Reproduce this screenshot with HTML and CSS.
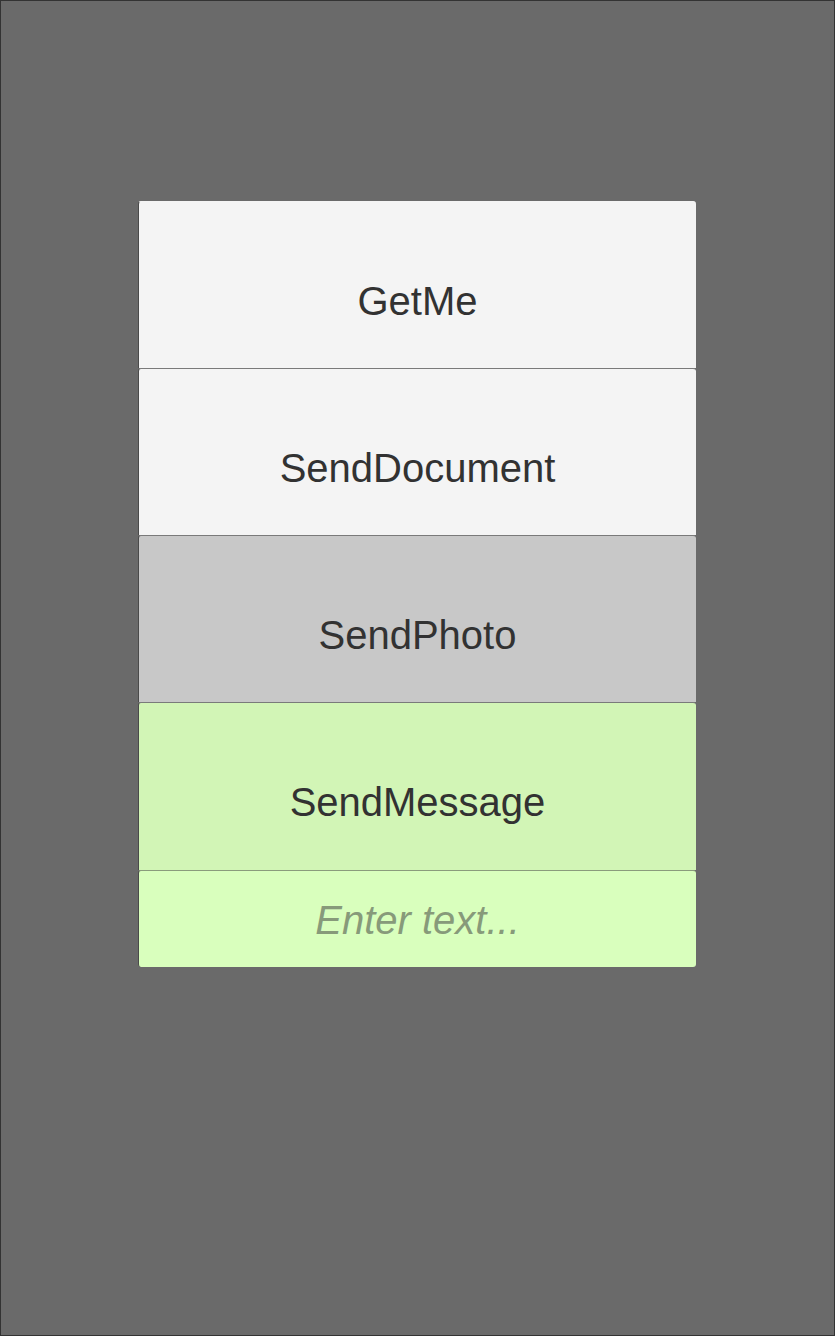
FILE: index.html
```html
<!DOCTYPE html>
<html>
<head>
<meta charset="utf-8">
<link rel="stylesheet" href="styles.css">
</head>
<body>
<div class="screen">
  <div class="panel">
    <button class="btn btn-first">GetMe</button>
    <button class="btn">SendDocument</button>
    <button class="btn btn-pressed">SendPhoto</button>
    <button class="btn btn-green">SendMessage</button>
    <div class="input"><span class="placeholder">Enter text...</span></div>
  </div>
</div>
</body>
</html>
```
FILE: styles.css
```css
html, body {
  margin: 0;
  padding: 0;
}
.screen {
  width: 835px;
  height: 1336px;
  box-sizing: border-box;
  border: 1px solid #333333;
  background: #6a6a6a;
  padding-top: 200px;
  padding-left: 137px;
}
.panel {
  width: 558px;
  display: flex;
  flex-direction: column;
}
.btn {
  display: flex;
  align-items: center;
  justify-content: center;
  height: 167px;
  box-sizing: border-box;
  border: none;
  border-top: 1px solid #7a7a7a;
  border-left: 1px solid #4a4a4a;
  border-radius: 3px 3px 0 0;
  margin: 0;
  padding: 32px 0 0 0;
  background: #f4f4f4;
  font-family: "Liberation Sans", Arial, sans-serif;
  font-size: 40px;
  color: #323232;
}
.btn-first {
  border-top: 1px solid #f4f4f4;
}
.btn-pressed {
  background: #c8c8c8;
}
.btn-green {
  background: #d2f5b6;
  height: 168px;
}
.input {
  height: 97px;
  box-sizing: border-box;
  background: #d9ffbd;
  border-top: 1px solid #8a9c7c;
  border-left: 1px solid #4a4a4a;
  border-radius: 3px;
  display: flex;
  align-items: center;
  justify-content: center;
  padding-top: 2px;
}
.placeholder {
  font-family: "Liberation Sans", Arial, sans-serif;
  font-style: italic;
  font-size: 40px;
  color: #879a7a;
}
```
